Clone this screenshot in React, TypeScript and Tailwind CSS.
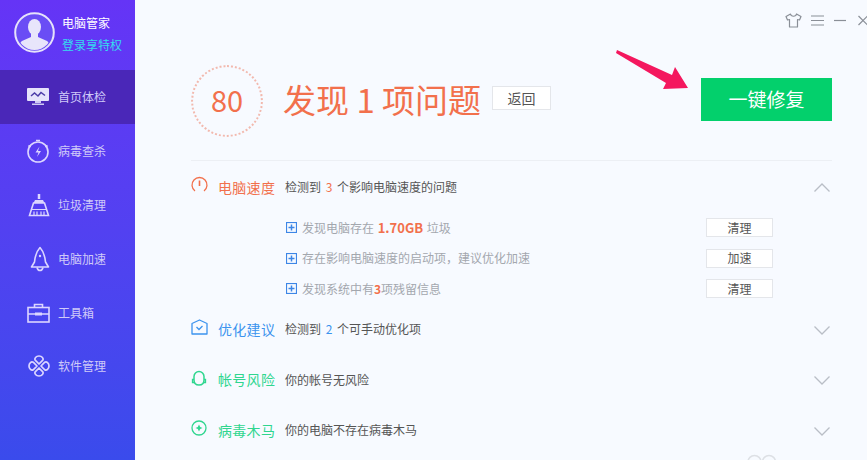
import React from "react";

const font = { fontFamily: '"Noto Sans CJK SC", "Liberation Sans", sans-serif' };

const S = "#dcd6ff";

function IconMonitor() {
  return (
    <svg width="24" height="20" viewBox="0 0 24 20">
      <rect x="1" y="1" width="22" height="13" rx="1" fill="#e6e3fb" />
      <path d="M5 9l3.500-3 3.500 3 3-3.500 4 3" fill="none" stroke="#4a3aa8" strokeWidth="1.500" />
      <path d="M9 14h6v2H9zM6 16.500h12V18H6z" fill="#cfc9f5" />
    </svg>
  );
}
function IconBolt() {
  return (
    <svg width="24" height="26" viewBox="0 0 24 26" fill="none" stroke={S} strokeWidth="1.600">
      <circle cx="12" cy="14" r="10" />
      <path d="M10 2.500h4M2.500 7.500l2 1.500M21.500 7.500l-2 1.500" />
      <path d="M13.500 8.500l-4 6h3l-1.500 4.500 4-6h-3z" fill={S} stroke="none" />
    </svg>
  );
}
function IconBroom() {
  return (
    <svg width="22" height="24" viewBox="0 0 22 24" fill="none" stroke={S} strokeWidth="1.600">
      <path d="M11 1v5" strokeWidth="2.500" />
      <path d="M7 7h8l1.500 3h-11z" fill={S} stroke="none" />
      <path d="M5.500 10L1.500 22.500h19L16.500 10z" />
      <path d="M6 22.500v-4M9 22.500v-4M13 22.500v-4M16 22.500v-4M3 16.500h16" strokeWidth="1.200" />
    </svg>
  );
}
function IconRocket() {
  return (
    <svg width="20" height="26" viewBox="0 0 20 26" fill="none" stroke={S} strokeWidth="1.600">
      <path d="M10 1.500C6 6 5 11 4.500 16L1.500 21h17l-3-5C15 11 14 6 10 1.500z" strokeLinejoin="round" />
      <path d="M7 21.500c.5 2 1.500 3 3 3s2.500-1 3-3" />
      <circle cx="10" cy="10" r="1.200" fill={S} stroke="none" />
    </svg>
  );
}
function IconBox() {
  return (
    <svg width="23" height="20" viewBox="0 0 23 20" fill="none" stroke={S} strokeWidth="1.600">
      <rect x="1" y="4.500" width="21" height="14.500" />
      <path d="M7.500 4.500V1.500h8v3M1 11h7M15 11h7" />
      <rect x="8" y="9.500" width="7" height="3" fill={S} stroke="none" />
    </svg>
  );
}
function IconClover() {
  return (
    <svg width="22" height="22" viewBox="0 0 22 22" fill="none" stroke={S} strokeWidth="1.700" strokeLinejoin="round">
      <path d="M11 9L7.200 5.200C6 3.500 8 1 11 1s5 2.500 3.800 4.200z" />
      <path d="M11 13l-3.800 3.800C6 18.500 8 21 11 21s5-2.500 3.800-4.200z" />
      <path d="M9 11L5.200 7.200C3.500 6 1 8 1 11s2.500 5 4.200 3.800z" />
      <path d="M13 11l3.800-3.800C18.500 6 21 8 21 11s-2.500 5-4.200 3.800z" />
    </svg>
  );
}
function Avatar() {
  return (
    <svg width="41" height="41" viewBox="0 0 41 41">
      <circle cx="20.500" cy="20.500" r="19.300" fill="#6a4df5" stroke="#e6e2fb" strokeWidth="2" />
      <clipPath id="c"><circle cx="20.500" cy="20.500" r="17.500" /></clipPath>
      <g clipPath="url(#c)" fill="#e8e5fb">
        <ellipse cx="20.500" cy="15" rx="6.500" ry="8" />
        <path d="M17 21h7v4l9 4c2 1 3 5 3 12H5c0-7 1-11 3-12l9-4z" />
      </g>
    </svg>
  );
}

const nav = [
  { t: "首页体检", I: IconMonitor, active: true },
  { t: "病毒查杀", I: IconBolt },
  { t: "垃圾清理", I: IconBroom },
  { t: "电脑加速", I: IconRocket },
  { t: "工具箱", I: IconBox },
  { t: "软件管理", I: IconClover },
];

function Sidebar() {
  return (
    <aside className="w-[135px] h-full shrink-0 bg-gradient-to-b from-[#6534f6] to-[#3a4bec]">
      <div className="h-[70px] flex items-start pl-[14px] pt-[12px] gap-[7px]">
        <Avatar />
        <div className="pt-[2px]">
          <div className="text-[12px] leading-[18px] text-white">电脑管家</div>
          <div className="text-[12px] leading-[18px] mt-[4px] text-[#35dcef]">登录享特权</div>
        </div>
      </div>
      {nav.map(({ t, I, active }) => (
        <div
          key={t}
          className={`h-[53.8px] pt-[1px] flex items-center ${active ? "bg-[#4a27b8]" : ""}`}
        >
          <div className="w-[58px] flex justify-end pr-[8px] shrink-0 pl-[20px]">
            <I />
          </div>
          <span className="text-[12px] text-[#cfcaf8]">{t}</span>
        </div>
      ))}
    </aside>
  );
}

function Chevron({ up }: { up?: boolean }) {
  return (
    <svg width="16" height="9" viewBox="0 0 16 9" fill="none" stroke="#b9bec6" strokeWidth="1.300" className={up ? "" : "mt-[2px]"}>
      <path d={up ? "M.5 8.500L8 1l7.500 7.500" : "M.5.500L8 8 15.500.5"} />
    </svg>
  );
}

function SmallBtn({ t }: { t: string }) {
  return (
    <div className="w-[67px] h-[19px] bg-white border border-[#e4e6ea] flex items-center justify-center text-[12px] text-[#555] leading-none">
      {t}
    </div>
  );
}

function Plus() {
  return (
    <svg width="11" height="11" viewBox="0 0 11 11" className="shrink-0" fill="none" stroke="#3d86e6">
      <rect x=".5" y=".5" width="10" height="10" strokeWidth="1.200" />
      <path d="M2.500 5.500h6M5.500 2.500v6" strokeWidth="1.500" />
    </svg>
  );
}

function SubRow({ children, btn }: { children: React.ReactNode; btn: string }) {
  return (
    <div className="h-[30.500px] flex items-center pl-[95px]">
      <Plus />
      <div className="ml-[5px] w-[404px] text-[12px] text-[#a3a7ae] whitespace-nowrap">{children}</div>
      <SmallBtn t={btn} />
    </div>
  );
}

function Row({
  icon,
  title,
  color,
  children,
  up,
}: {
  icon: React.ReactNode;
  title: string;
  color: string;
  children: React.ReactNode;
  up?: boolean;
}) {
  return (
    <div className="flex items-center h-[50.500px]">
      <div className="w-[27px] shrink-0 flex items-center">{icon}</div>
      <div className="w-[67px] shrink-0 text-[14px] tracking-[0.3px] whitespace-nowrap" style={{ color }}>
        {title}
      </div>
      <div className="flex-1 text-[12px] text-[#555] whitespace-nowrap">{children}</div>
      <div className="mr-[2px]">
        <Chevron up={up} />
      </div>
    </div>
  );
}

export default function App() {
  return (
    <div style={font} className="relative flex w-[867px] h-[460px] overflow-hidden bg-[#f7faff]">
      <Sidebar />
      <main className="flex-1 min-w-0 pl-[56px] pr-[35px] flex flex-col">
        <div className="h-[65px] -mr-[35px] flex items-start justify-end pt-[13px]">
          <svg width="17" height="15" viewBox="0 0 17 15" fill="none" stroke="#8a8f97" strokeWidth="1.200" strokeLinejoin="round">
            <path d="M5.500 1L1 3.500 2.500 7l2-.5V14h8V6.500l2 .5L16 3.500 11.500 1c-.5 3-5.500 3-6 0z" />
          </svg>
          <svg width="13" height="15" viewBox="0 0 13 15" stroke="#8a8f97" strokeWidth="1.200" className="ml-[9px]">
            <path d="M0 3h13M0 7.500h13M0 12h13" />
          </svg>
          <svg width="12" height="15" viewBox="0 0 12 15" stroke="#8a8f97" strokeWidth="1.200" className="ml-[10px]">
            <path d="M0 7.500h12" />
          </svg>
          <svg width="10" height="15" viewBox="0 0 10 15" stroke="#8a8f97" strokeWidth="1.200" className="ml-[12px] -mr-[1px]">
            <path d="M.5 3l9 9M9.500 3l-9 9" />
          </svg>
        </div>

        <div className="h-[96px] flex items-start border-b border-[#eceff4]">
          <div className="w-[72px] h-[72px] pb-[3px] rounded-full border-2 border-dotted border-[#f2b9ae] flex items-center justify-center text-[29px] text-[#f2704c] shrink-0">
            80
          </div>
          <div className="ml-[20px] mt-[10px] text-[33px] leading-[48px] text-[#f2704c] whitespace-nowrap">
            发现 1 项问题
          </div>
          <div className="ml-[11px] mt-[21px] w-[59px] h-[24px] bg-white border border-[#e4e6ea] flex items-center justify-center text-[14px] text-[#555]">
            返回
          </div>
          <div className="ml-auto mt-[13px] w-[131px] h-[43px] bg-[#03d06c] flex items-center justify-center text-[19px] text-white">
            一键修复
          </div>
        </div>

        <div className="mt-[1px]">
          <Row
            up
            title="电脑速度"
            color="#f2704c"
            icon={
              <svg width="17" height="17" viewBox="0 0 17 17" fill="none" stroke="#f2704c" strokeWidth="1.300" className="-mt-[5px]">
                <path d="M4 15A7.500 7.500 0 1 1 13 15" />
                <path d="M8.500 4.500V10" strokeWidth="1.600" />
              </svg>
            }
          >
            检测到 <span className="text-[#f2704c] mx-[2px]">3</span> 个影响电脑速度的问题
          </Row>
        </div>
        <div>
          <SubRow btn="清理">
            发现电脑存在 <b className="text-[#f2704c] font-bold text-[13px] mx-[1px]">1.70GB</b> 垃圾
          </SubRow>
          <SubRow btn="加速">存在影响电脑速度的启动项，建议优化加速</SubRow>
          <SubRow btn="清理">
            发现系统中有<b className="text-[#f2704c] font-bold">3</b>项残留信息
          </SubRow>
        </div>
        <div>
          <Row
            title="优化建议"
            color="#3b93ee"
            icon={
              <svg width="17" height="16" viewBox="0 0 17 16" fill="none" stroke="#3b93ee" strokeWidth="1.300" className="-mt-[4px]">
                <path d="M1 4.500L8.500 1 16 4.500V15H1z" strokeLinejoin="round" />
                <path d="M5.500 8l2.500 2.500L11.500 7" />
              </svg>
            }
          >
            检测到 <span className="text-[#3b93ee] mx-[2px]">2</span> 个可手动优化项
          </Row>
          <Row
            title="帐号风险"
            color="#2fd68f"
            icon={
              <svg width="16" height="17" viewBox="0 0 16 17" fill="none" stroke="#2fd68f" strokeWidth="1.500" className="-mt-[3px]">
                <path d="M3 10V6.500a5 5 0 0 1 10 0V10c0 3-2 5-5 5s-5-2-5-5z" />
                <path d="M3 9.500H1.500v3H3M13 9.500h1.500v3H13" strokeWidth="1.300" />
              </svg>
            }
          >
            你的帐号无风险
          </Row>
          <Row
            title="病毒木马"
            color="#2fd68f"
            icon={
              <svg width="16" height="16" viewBox="0 0 16 16" fill="none" stroke="#2fd68f" strokeWidth="1.300" className="-mt-[5px]">
                <circle cx="8" cy="8" r="7" />
                <path d="M8 4.500L9.200 7 11.500 8 9.200 9 8 11.500 6.800 9 4.500 8 6.800 7z" fill="#2fd68f" stroke="none" />
              </svg>
            }
          >
            你的电脑不存在病毒木马
          </Row>
        </div>
      </main>

      <svg width="74" height="42" viewBox="0 0 74 42" className="absolute left-[616px] top-[49px]">
        <path d="M1 1L56 26 59 18 72 39 47 40 50 34 0 4z" fill="#f4175e" />
      </svg>
      <svg width="30" height="6" viewBox="0 0 30 6" className="absolute left-[747px] top-[454px]" fill="none" stroke="#dde0e5" strokeWidth="1.500">
        <circle cx="7.500" cy="8" r="6.500" />
        <circle cx="22" cy="8" r="6.500" />
      </svg>
    </div>
  );
}
